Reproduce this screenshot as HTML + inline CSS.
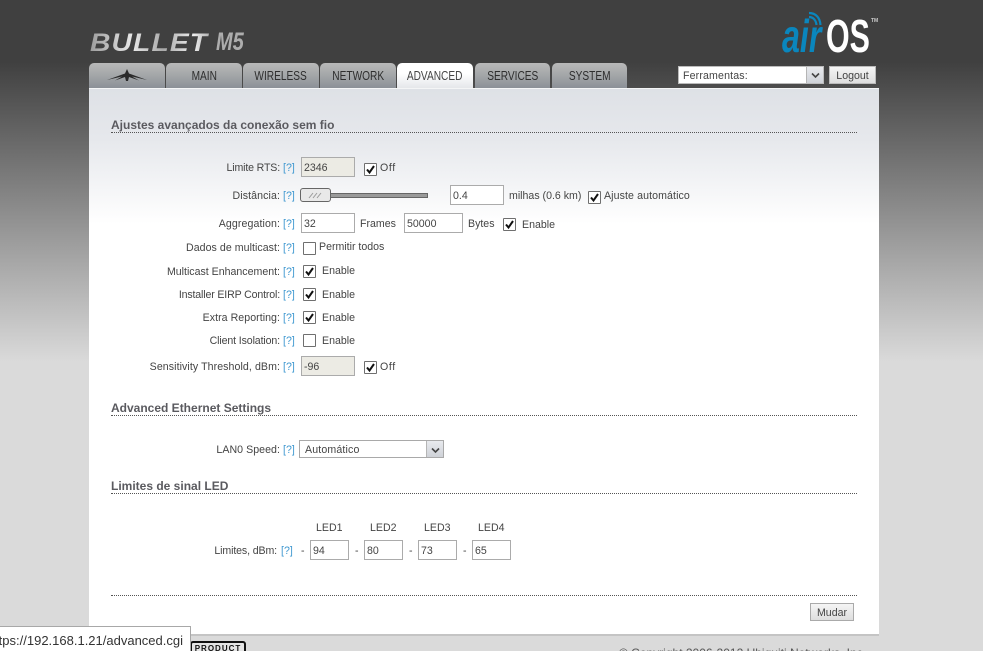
<!DOCTYPE html>
<html style="height:651px;width:983px;overflow:hidden;background:#dadada"><head><meta charset="utf-8"><title>airOS</title>
<style>
html,body{margin:0;padding:0}
body{width:983px;height:651px;overflow:hidden;position:relative;font:10.6px "Liberation Sans",Arial,sans-serif;color:#444}
div,span,svg{position:absolute}
#bg{left:0;top:0;width:983px;height:651px;background:linear-gradient(#404040 0,#404040 62px,#dadada 362px,#dadada 651px)}
#panel{left:89px;top:88px;width:790px;height:545px;border-top:1px solid #f4f5f6;border-bottom:2px solid #c4c4c4;background:linear-gradient(#dee1e6 0,#e6e8ec 50px,#f3f4f6 95px,#fff 135px)}
.tab{top:63px;width:76px;height:25px;border-radius:5px 5px 0 0;background:linear-gradient(#b9b9b9 0,#a3a6a8 50%,#8b9097 100%);font:13px "Liberation Sans",sans-serif;color:#2e2e2e;text-align:center;line-height:26px}
.tab b{font-weight:normal;display:inline-block;transform:scaleX(.78)}
.tab.on{background:linear-gradient(#fff 0,#fff 40%,#e3e5e9 100%);height:26px;color:#444}
.h{left:111px;font:bold 12px/14px "Liberation Sans",sans-serif;color:#5a5a5f;white-space:nowrap}
.dl{left:111px;width:746px;height:0;border-top:1px dotted #555}
.l{right:703px;white-space:nowrap;line-height:13px;text-align:right;margin-top:1px}
.q{color:#3f98d0;left:283px;line-height:13px;margin-top:1px}
.t{white-space:nowrap;line-height:13px;margin-top:1px}
.i{box-sizing:border-box;height:20px;border:1px solid #ababab;background:#fff;font:10.6px/18px "Liberation Sans",sans-serif;padding-top:1px;padding-left:2px;color:#444}
.i.d{background:#ecebe4}
.c{box-sizing:border-box;width:13px;height:13px;border:1px solid #6f6f6f;border-radius:1px;background:#fff}
.c svg{left:0;top:0}
.btn{box-sizing:border-box;border:1px solid #aaa;background:linear-gradient(#f5f5f5,#dedede);font:10.6px "Liberation Sans",sans-serif;color:#444;text-align:center}
.sel{box-sizing:border-box;border:1px solid #a9a9a9;background:#fff;font:10.6px "Liberation Sans",sans-serif;color:#444;letter-spacing:.15px}
.ar{right:0;top:0;bottom:0;width:16px;background:linear-gradient(#e8eaee,#cfd2d8);border-left:1px solid #b5b5b5}
</style></head><body>
<div id="bg"></div>

<!-- product logo -->
<div style="left:90px;top:28px;width:108px;height:30px;font:italic bold 25px/30px 'Liberation Sans',sans-serif;letter-spacing:1px;white-space:nowrap;background:linear-gradient(90deg,#9d9d9d,#e8e8e8 35%,#a9a9a9 60%,#ededed 85%,#a8a8a8);-webkit-background-clip:text;background-clip:text;color:transparent;transform-origin:left center;transform:scaleX(1.13)">BULLET</div>
<div style="left:216px;top:27px;font:italic bold 25px/30px 'Liberation Sans',sans-serif;color:#adadad;white-space:nowrap;transform-origin:left center;transform:scaleX(.8)">M5</div>

<!-- airOS logo -->
<div style="left:782px;top:13px;font:italic bold 46px/46px 'Liberation Sans',sans-serif;color:#0a86bd;transform-origin:left top;transform:scaleX(.7)">air</div>
<div style="left:826px;top:13px;font:bold 46px/46px 'Liberation Sans',sans-serif;color:#fff;transform-origin:left top;transform:scaleX(.66)">OS</div>
<div style="left:871px;top:18px;font:bold 5px/6px 'Liberation Sans',sans-serif;color:#ccc">TM</div>
<svg style="left:806px;top:11px" width="20" height="18" viewBox="0 0 20 18" fill="none" stroke="#0a86bd" stroke-width="2.200"><path d="M3 2C10 2 14 7 14.500 14"/><path d="M3 6C7 6 10 9 10.500 14"/></svg>

<!-- tabs -->
<div class="tab" style="left:89px"></div>
<svg style="left:105px;top:66px" width="44" height="20" viewBox="0 0 44 20"><path d="M2 14L20 7.500 22 3 24 7.500 42 14 27 10.500 34 14.500 24 11 23 15 21 15 20 11 10 14.500 17 10.500Z" fill="#2a2a2a"/></svg>
<div class="tab" style="left:166px"><b>MAIN</b></div>
<div class="tab" style="left:243px"><b>WIRELESS</b></div>
<div class="tab" style="left:320px"><b>NETWORK</b></div>
<div class="tab on" style="left:397px"><b>ADVANCED</b></div>
<div class="tab" style="left:475px;width:75px"><b>SERVICES</b></div>
<div class="tab" style="left:552px;width:75px"><b>SYSTEM</b></div>

<!-- tools -->
<div class="sel" style="left:678px;top:66px;width:146px;height:18px;line-height:19px;padding-left:4px;border-color:#bbb">Ferramentas:<span class="ar"><svg style="left:4px;top:5px" width="9" height="7" viewBox="0 0 9 7" fill="none" stroke="#444" stroke-width="1.600"><path d="M1 1.500L4.500 5 8 1.500"/></svg></span></div>
<div class="btn" style="left:829px;top:66px;width:47px;height:18px;line-height:19px;border-color:#bbb">Logout</div>

<div id="panel"></div>

<!-- section 1 -->
<div class="h" style="top:118px">Ajustes avançados da conexão sem fio</div>
<div class="dl" style="top:132px"></div>

<div class="l" style="top:161px;letter-spacing:-.15px">Limite RTS:</div><div class="q" style="top:161px">[?]</div>
<div class="i d" style="left:301px;top:157px;width:54px">2346</div>
<div class="c" style="left:364px;top:163px"><svg width="11" height="11" viewBox="0 0 11 11" fill="none" stroke="#111" stroke-width="2"><path d="M2 5.500L4.500 8.500 9 2"/></svg></div>
<div class="t" style="left:380px;top:161px;letter-spacing:.6px">Off</div>

<div class="l" style="top:189px;letter-spacing:.1px">Distância:</div><div class="q" style="top:189px">[?]</div>
<div style="left:328px;top:193px;width:99px;height:3px;background:#9a9a9a;border:1px solid #666;border-left:0;box-sizing:content-box"></div>
<div style="left:300px;top:188px;width:29px;height:12px;border:1px solid #666;border-radius:3px;background:#e9e9e9"></div>
<svg style="left:308px;top:190px" width="16" height="10" viewBox="0 0 16 10" fill="none" stroke="#999" stroke-width="1"><path d="M1 8L5 3M5 8L9 3M9 8L13 3"/></svg>
<div class="i" style="left:450px;top:185px;width:54px">0.4</div>
<div class="t" style="left:509px;top:189px">milhas (0.6 km)</div>
<div class="c" style="left:588px;top:191px"><svg width="11" height="11" viewBox="0 0 11 11" fill="none" stroke="#111" stroke-width="2"><path d="M2 5.500L4.500 8.500 9 2"/></svg></div>
<div class="t" style="left:604px;top:189px;letter-spacing:.1px">Ajuste automático</div>

<div class="l" style="top:217px;letter-spacing:.1px">Aggregation:</div><div class="q" style="top:217px">[?]</div>
<div class="i" style="left:301px;top:213px;width:54px">32</div>
<div class="t" style="left:360px;top:217px">Frames</div>
<div class="i" style="left:404px;top:213px;width:59px">50000</div>
<div class="t" style="left:468px;top:217px">Bytes</div>
<div class="c" style="left:503px;top:218px"><svg width="11" height="11" viewBox="0 0 11 11" fill="none" stroke="#111" stroke-width="2"><path d="M2 5.500L4.500 8.500 9 2"/></svg></div>
<div class="t" style="left:522px;top:218px">Enable</div>

<div class="l" style="top:241px;letter-spacing:.05px">Dados de multicast:</div><div class="q" style="top:241px">[?]</div>
<div class="c" style="left:303px;top:242px"></div>
<div class="t" style="left:319px;top:240px">Permitir todos</div>

<div class="l" style="top:265px">Multicast Enhancement:</div><div class="q" style="top:265px">[?]</div>
<div class="c" style="left:303px;top:265px"><svg width="11" height="11" viewBox="0 0 11 11" fill="none" stroke="#111" stroke-width="2"><path d="M2 5.500L4.500 8.500 9 2"/></svg></div>
<div class="t" style="left:322px;top:264px">Enable</div>

<div class="l" style="top:288px;letter-spacing:-.15px">Installer EIRP Control:</div><div class="q" style="top:288px">[?]</div>
<div class="c" style="left:303px;top:288px"><svg width="11" height="11" viewBox="0 0 11 11" fill="none" stroke="#111" stroke-width="2"><path d="M2 5.500L4.500 8.500 9 2"/></svg></div>
<div class="t" style="left:322px;top:288px">Enable</div>

<div class="l" style="top:311px;letter-spacing:.05px">Extra Reporting:</div><div class="q" style="top:311px">[?]</div>
<div class="c" style="left:303px;top:311px"><svg width="11" height="11" viewBox="0 0 11 11" fill="none" stroke="#111" stroke-width="2"><path d="M2 5.500L4.500 8.500 9 2"/></svg></div>
<div class="t" style="left:322px;top:311px">Enable</div>

<div class="l" style="top:334px;letter-spacing:-.12px">Client Isolation:</div><div class="q" style="top:334px">[?]</div>
<div class="c" style="left:303px;top:334px"></div>
<div class="t" style="left:322px;top:334px">Enable</div>

<div class="l" style="top:360px;letter-spacing:.08px">Sensitivity Threshold, dBm:</div><div class="q" style="top:360px">[?]</div>
<div class="i d" style="left:301px;top:356px;width:54px">-96</div>
<div class="c" style="left:364px;top:361px"><svg width="11" height="11" viewBox="0 0 11 11" fill="none" stroke="#111" stroke-width="2"><path d="M2 5.500L4.500 8.500 9 2"/></svg></div>
<div class="t" style="left:380px;top:360px;letter-spacing:.6px">Off</div>

<!-- section 2 -->
<div class="h" style="top:401px">Advanced Ethernet Settings</div>
<div class="dl" style="top:415px"></div>
<div class="l" style="top:443px;letter-spacing:.05px">LAN0 Speed:</div><div class="q" style="top:443px">[?]</div>
<div class="sel" style="left:299px;top:440px;width:145px;height:18px;line-height:18px;padding-left:5px">Automático<span class="ar"><svg style="left:4px;top:6px" width="9" height="7" viewBox="0 0 9 7" fill="none" stroke="#444" stroke-width="1.600"><path d="M1 1.500L4.500 5 8 1.500"/></svg></span></div>

<!-- section 3 -->
<div class="h" style="top:479px">Limites de sinal LED</div>
<div class="dl" style="top:493px"></div>
<div class="t" style="left:316px;top:521px">LED1</div>
<div class="t" style="left:370px;top:521px">LED2</div>
<div class="t" style="left:424px;top:521px">LED3</div>
<div class="t" style="left:478px;top:521px">LED4</div>
<div class="l" style="top:544px;right:706px;letter-spacing:-.12px">Limites, dBm:</div><div class="q" style="top:544px;left:281px">[?]</div>
<div class="t" style="left:301px;top:544px">-</div>
<div class="i" style="left:310px;top:540px;width:39px">94</div>
<div class="t" style="left:355px;top:544px">-</div>
<div class="i" style="left:364px;top:540px;width:39px">80</div>
<div class="t" style="left:409px;top:544px">-</div>
<div class="i" style="left:418px;top:540px;width:39px">73</div>
<div class="t" style="left:463px;top:544px">-</div>
<div class="i" style="left:472px;top:540px;width:39px">65</div>

<div class="dl" style="top:595px"></div>
<div class="btn" style="left:810px;top:603px;width:44px;height:18px;line-height:18px">Mudar</div>

<!-- footer -->
<div style="left:0;top:0;width:983px;height:651px;overflow:hidden">
<div class="t" style="left:619px;top:646px;font-size:12px;color:#555">© Copyright 2006-2012 Ubiquiti Networks, Inc.</div>
<div style="left:190px;top:641px;width:52px;height:14px;border:2px solid #111;border-radius:3px;background:#e4e4e4;font:bold 8px/11px 'Liberation Sans',sans-serif;color:#111;text-align:center;letter-spacing:1px">PRODUCT</div>
<div style="left:0;top:626px;width:191px;height:26px;box-sizing:border-box;background:#fff;border:1px solid #a8a8a8;border-left:0;overflow:hidden;font:13px/28px 'Liberation Sans',sans-serif;color:#333;white-space:nowrap"><span style="right:7px;top:0">https://192.168.1.21/advanced.cgi</span></div>
</div>
</body></html>
